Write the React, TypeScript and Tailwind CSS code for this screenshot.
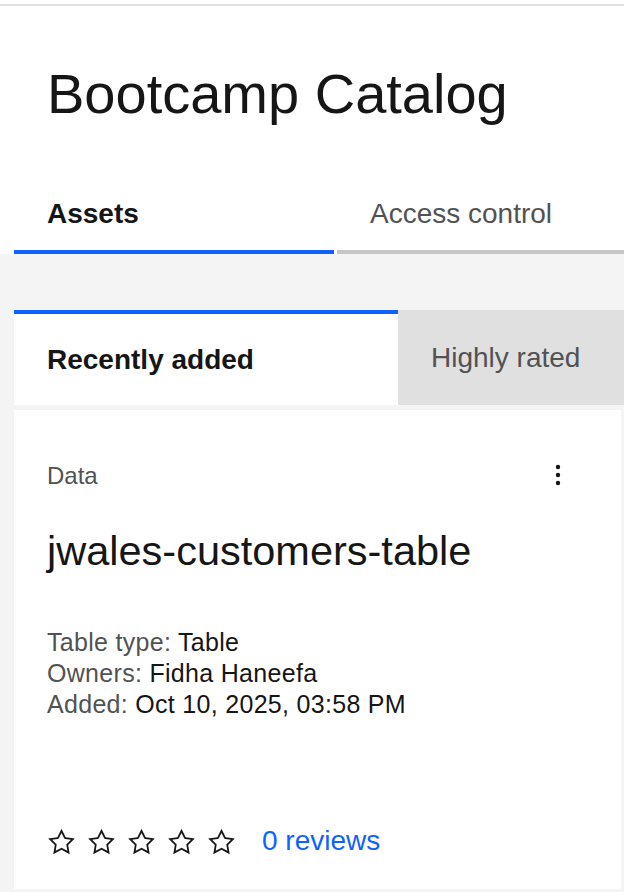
import React from "react";

const font = { fontFamily: '"Liberation Sans", Arial, sans-serif' };

function StarOutline() {
  return (
    <svg width="29" height="29" viewBox="0 0 32 32" fill="#161616">
      <path d="M16,6.52l2.76,5.58.46,1,1,.15,6.16.89L22,18.44l-.75.73.18,1,1.05,6.13-5.51-2.89L16,23l-.93.49L9.56,26.34l1-6.13.18-1L10,18.440,5.54,14.09l6.16-.89,1-.15.46-1L16,6.52M16,2l-4.55,9.22L1.28,12.690l7.36,7.18L6.9,30,16,25.22,25.1,30,23.36,19.87l7.36-7.17L20.55,11.22Z" />
    </svg>
  );
}

function Kebab() {
  return (
    <svg width="28" height="28" viewBox="0 0 28 28" fill="#161616">
      <circle cx="14" cy="6" r="2.2" />
      <circle cx="14" cy="14" r="2.2" />
      <circle cx="14" cy="22" r="2.2" />
    </svg>
  );
}

function Meta({ label, value }: { label: string; value: string }) {
  return (
    <div>
      <span className="text-[#525252]">{label}</span>{" "}
      <span className="text-[#161616]">{value}</span>
    </div>
  );
}

export default function App() {
  return (
    <div className="w-[624px] h-[892px] overflow-hidden bg-[#f4f4f4]" style={font}>
      {/* header */}
      <div className="bg-white pt-[4px]">
        <div className="border-t-2 border-[#e0e0e0]" />
        <h1 className="pl-[47px] pt-[56px] text-[56px] leading-[64px] text-[#161616] font-normal">
          Bootcamp Catalog
        </h1>
        <div className="flex pl-[14px] pt-[52px]">
          <div className="w-[320px] pl-[33px] pt-[18px] pb-[18px] border-b-4 border-[#0f62fe] text-[28px] leading-[36px] font-bold text-[#161616]">
            Assets
          </div>
          <div className="flex-1 ml-[3px] pl-[33px] pt-[18px] pb-[18px] border-b-4 border-[#c6c6c6] text-[28px] leading-[36px] text-[#525252]">
            Access control
          </div>
        </div>
      </div>

      {/* content */}
      <div className="pl-[14px] pt-[56px]">
        <div className="flex h-[95px]">
          <div className="w-[384px] bg-white border-t-4 border-[#0f62fe] flex items-center pl-[33px] text-[28px] font-bold text-[#161616]">
            Recently added
          </div>
          <div className="flex-1 bg-[#e0e0e0] flex items-center pl-[33px] text-[28px] text-[#525252]">
            Highly rated
          </div>
        </div>

        <div className="mt-[5px] mr-[3px] h-[479px] bg-white flex flex-col pl-[33px] pr-[49px] pt-[51px] pb-[30px]">
          <div className="flex items-start justify-between">
            <div className="text-[24px] leading-[30px] text-[#525252]">Data</div>
            <Kebab />
          </div>
          <div className="mt-[36px] text-[41.5px] leading-[48px] text-[#161616]">
            jwales-customers-table
          </div>
          <div className="mt-[52px] text-[25px] leading-[31px] tracking-[0.3px]">
            <Meta label="Table type:" value="Table" />
            <Meta label="Owners:" value="Fidha Haneefa" />
            <Meta label="Added:" value="Oct 10, 2025, 03:58 PM" />
          </div>
          <div className="mt-auto flex items-center">
            <div className="flex gap-[11px]">
              <StarOutline />
              <StarOutline />
              <StarOutline />
              <StarOutline />
              <StarOutline />
            </div>
            <a className="ml-[26px] text-[28px] leading-[36px] text-[#0f62fe]">0 reviews</a>
          </div>
        </div>
      </div>
    </div>
  );
}
